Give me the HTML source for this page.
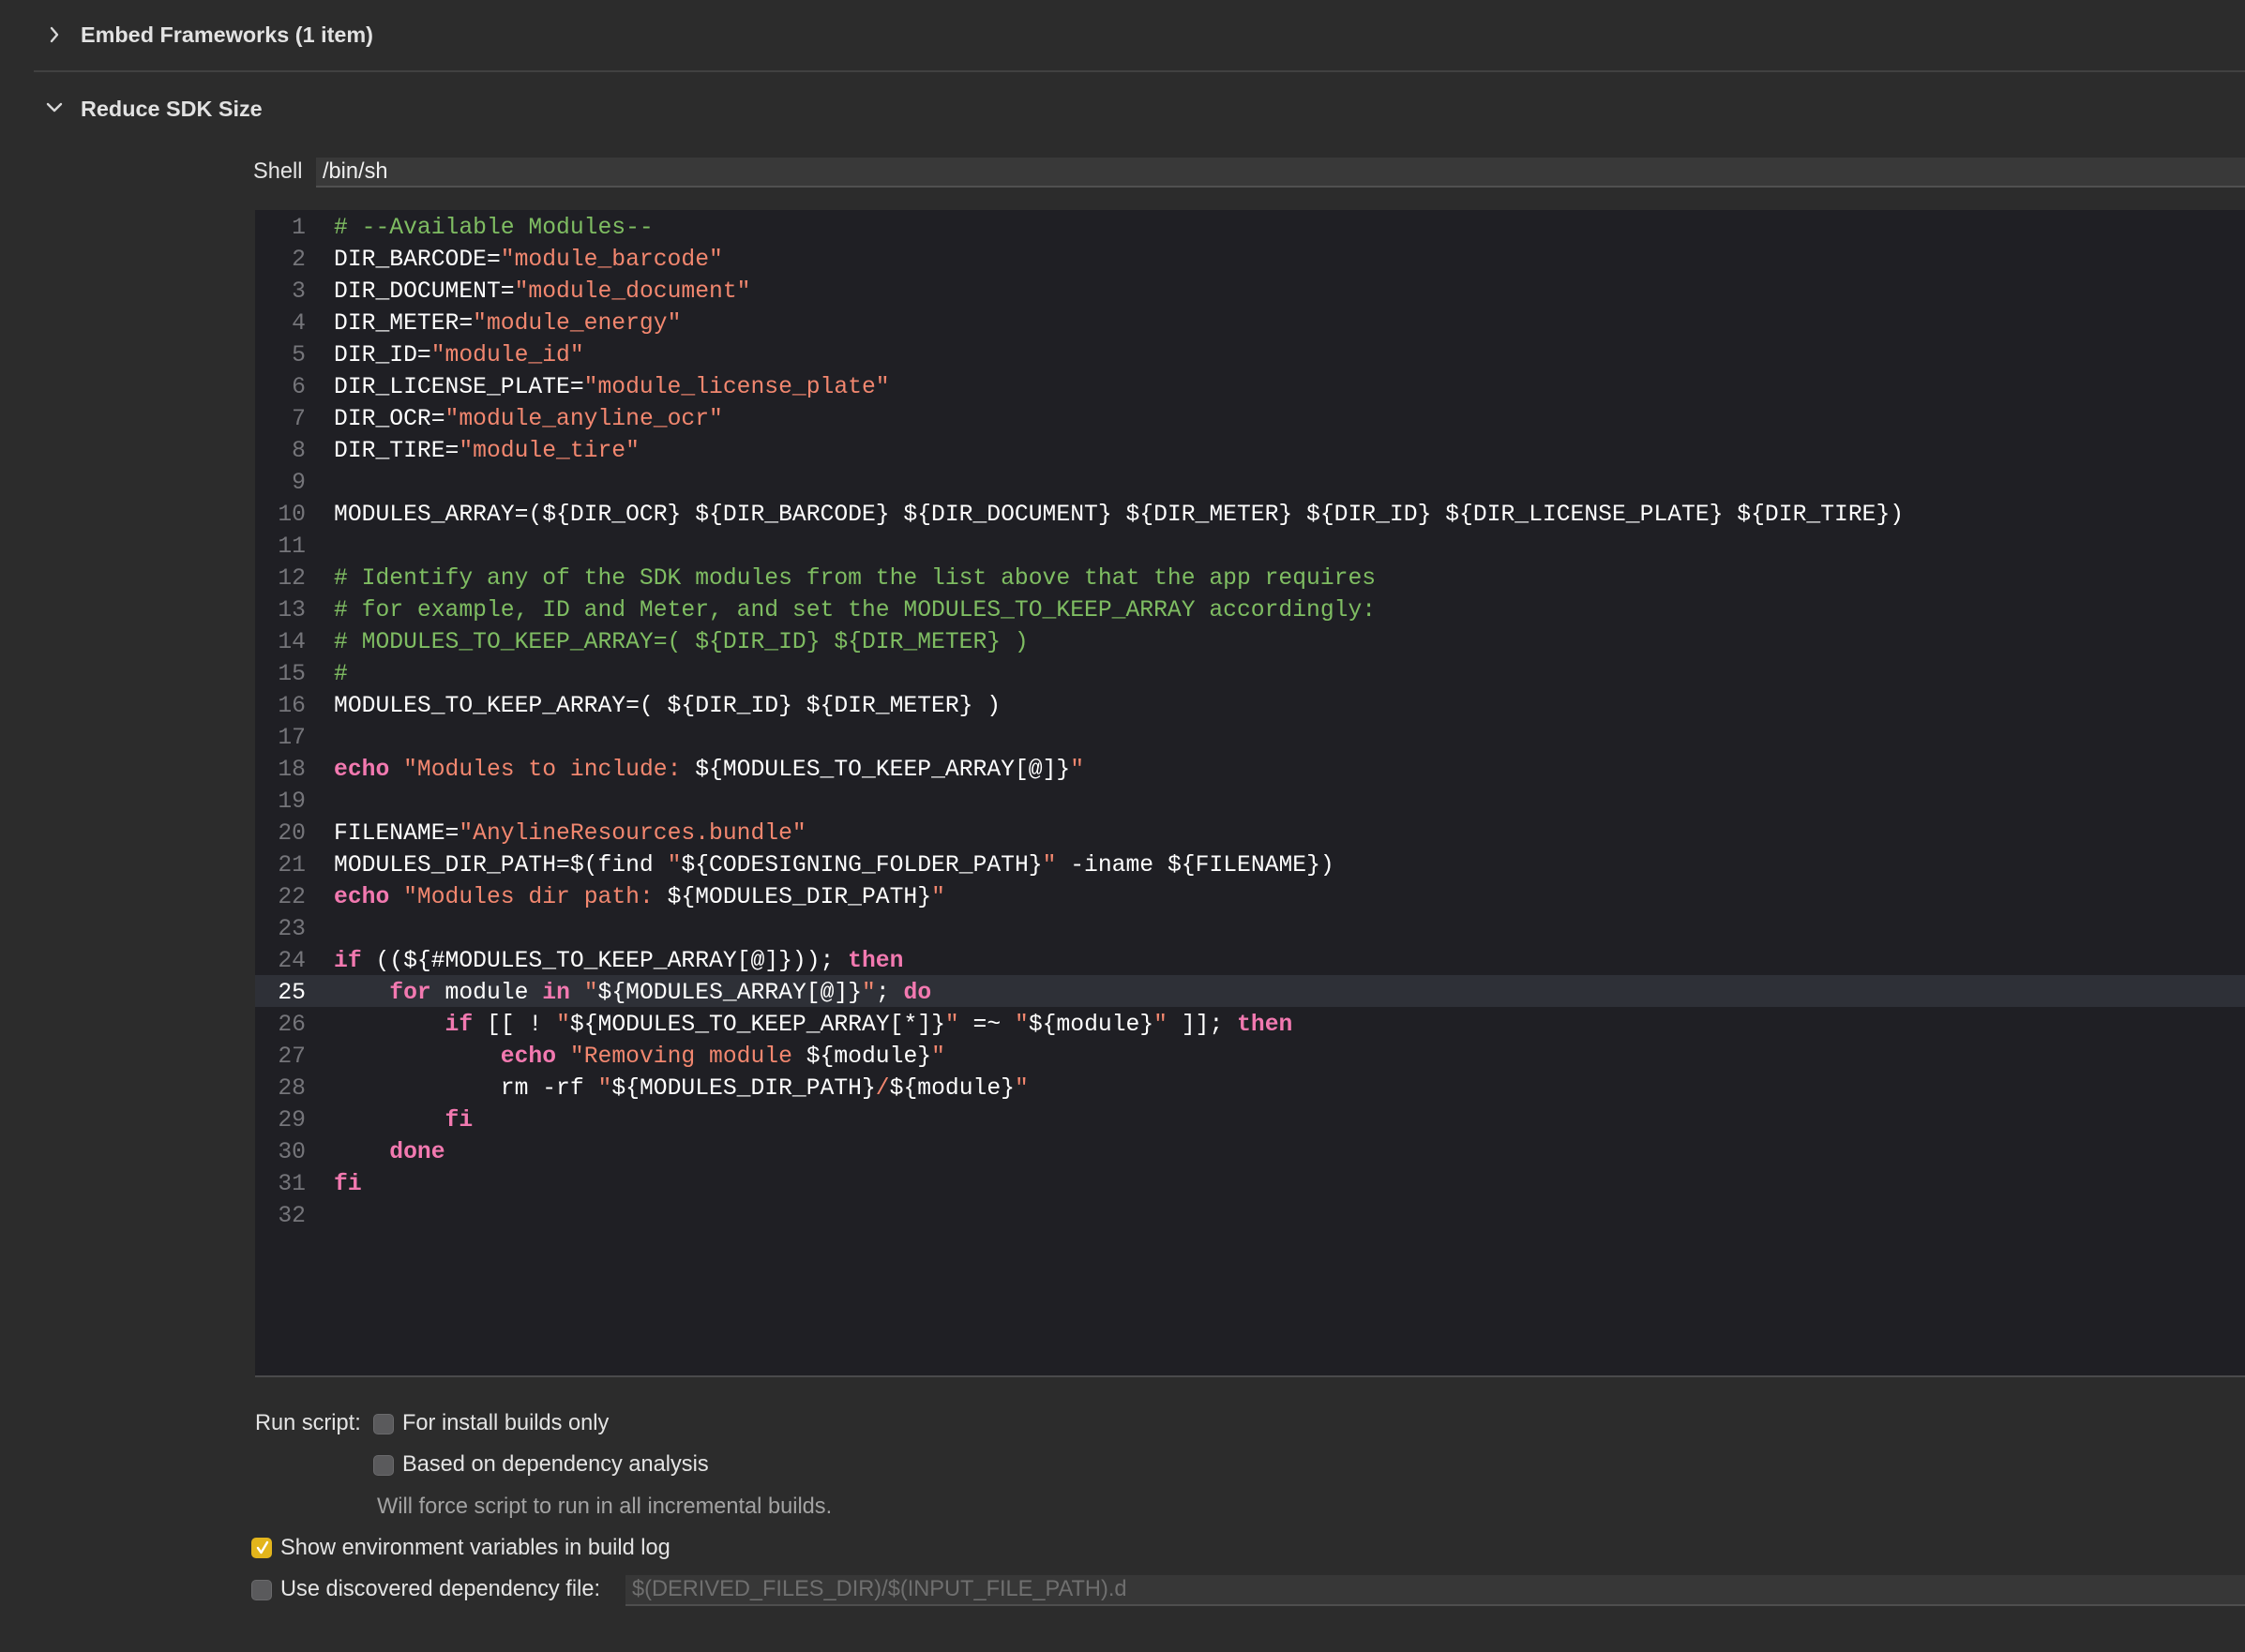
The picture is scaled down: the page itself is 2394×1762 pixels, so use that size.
<!DOCTYPE html>
<html><head><meta charset="utf-8"><style>
html,body{margin:0;padding:0;width:2394px;height:1762px;overflow:hidden;background:#2c2c2c;font-family:"Liberation Sans",sans-serif;color:#e6e6e6;}
.abs{position:absolute;}
.hdr{font-weight:bold;font-size:23.4px;color:#e2e2e2;}
.ui{font-size:23.6px;color:#e4e4e4;}
.editor{position:absolute;left:272px;top:224px;width:2122px;height:1243px;background:#1f1f24;border-bottom:2px solid #4a4a4c;}
.ln{position:absolute;left:0;width:2122px;height:34px;font-family:"Liberation Mono",monospace;font-size:24.7px;line-height:34px;white-space:pre;color:#fff;padding-top:2px;box-sizing:border-box;}
.ln .n{position:absolute;left:0;width:54px;text-align:right;color:#75757a;}
.ln .c{position:absolute;left:84px;}
.cur{background:#2e3037;}
.cur .n{color:#fff;}
.g{color:#7fbd62;}
.s{color:#f2876f;}
.k{color:#f279b0;font-weight:bold;}
.cb{position:absolute;width:20px;height:20px;border-radius:5px;background:#5a5a5c;border:1px solid #6a6a6c;}
</style></head><body>
<svg class="abs" style="left:51px;top:27px" width="14" height="20" viewBox="0 0 14 20"><path d="M4 3 L10 10 L4 17" stroke="#d8d8d8" stroke-width="2.4" fill="none" stroke-linecap="round" stroke-linejoin="round"/></svg>
<div class="abs hdr" style="left:86px;top:24px">Embed Frameworks (1 item)</div>
<div class="abs" style="left:36px;top:75px;width:2358px;height:2px;background:#414141"></div>
<svg class="abs" style="left:48px;top:108px" width="20" height="14" viewBox="0 0 20 14"><path d="M3 3 L10 10 L17 3" stroke="#d8d8d8" stroke-width="2.4" fill="none" stroke-linecap="round" stroke-linejoin="round"/></svg>
<div class="abs hdr" style="left:86px;top:103px">Reduce SDK Size</div>
<div class="abs ui" style="left:270px;top:170px">Shell</div>
<div class="abs" style="left:337px;top:168px;width:2057px;height:30px;background:#393939;border-bottom:2px solid #505050"></div>
<div class="abs ui" style="left:344px;top:170px;color:#f0f0f0">/bin/sh</div>
<div class="editor">
<div class="ln" style="top:0"><span class="n">1</span><span class="c g"># --Available Modules--</span></div>
<div class="ln" style="top:34px"><span class="n">2</span><span class="c">DIR_BARCODE=<span class="s">"module_barcode"</span></span></div>
<div class="ln" style="top:68px"><span class="n">3</span><span class="c">DIR_DOCUMENT=<span class="s">"module_document"</span></span></div>
<div class="ln" style="top:102px"><span class="n">4</span><span class="c">DIR_METER=<span class="s">"module_energy"</span></span></div>
<div class="ln" style="top:136px"><span class="n">5</span><span class="c">DIR_ID=<span class="s">"module_id"</span></span></div>
<div class="ln" style="top:170px"><span class="n">6</span><span class="c">DIR_LICENSE_PLATE=<span class="s">"module_license_plate"</span></span></div>
<div class="ln" style="top:204px"><span class="n">7</span><span class="c">DIR_OCR=<span class="s">"module_anyline_ocr"</span></span></div>
<div class="ln" style="top:238px"><span class="n">8</span><span class="c">DIR_TIRE=<span class="s">"module_tire"</span></span></div>
<div class="ln" style="top:272px"><span class="n">9</span></div>
<div class="ln" style="top:306px"><span class="n">10</span><span class="c">MODULES_ARRAY=(${DIR_OCR} ${DIR_BARCODE} ${DIR_DOCUMENT} ${DIR_METER} ${DIR_ID} ${DIR_LICENSE_PLATE} ${DIR_TIRE})</span></div>
<div class="ln" style="top:340px"><span class="n">11</span></div>
<div class="ln" style="top:374px"><span class="n">12</span><span class="c g"># Identify any of the SDK modules from the list above that the app requires</span></div>
<div class="ln" style="top:408px"><span class="n">13</span><span class="c g"># for example, ID and Meter, and set the MODULES_TO_KEEP_ARRAY accordingly:</span></div>
<div class="ln" style="top:442px"><span class="n">14</span><span class="c g"># MODULES_TO_KEEP_ARRAY=( ${DIR_ID} ${DIR_METER} )</span></div>
<div class="ln" style="top:476px"><span class="n">15</span><span class="c g">#</span></div>
<div class="ln" style="top:510px"><span class="n">16</span><span class="c">MODULES_TO_KEEP_ARRAY=( ${DIR_ID} ${DIR_METER} )</span></div>
<div class="ln" style="top:544px"><span class="n">17</span></div>
<div class="ln" style="top:578px"><span class="n">18</span><span class="c"><span class="k">echo</span> <span class="s">"Modules to include: </span>${MODULES_TO_KEEP_ARRAY[@]}<span class="s">"</span></span></div>
<div class="ln" style="top:612px"><span class="n">19</span></div>
<div class="ln" style="top:646px"><span class="n">20</span><span class="c">FILENAME=<span class="s">"AnylineResources.bundle"</span></span></div>
<div class="ln" style="top:680px"><span class="n">21</span><span class="c">MODULES_DIR_PATH=$(find <span class="s">"</span>${CODESIGNING_FOLDER_PATH}<span class="s">"</span> -iname ${FILENAME})</span></div>
<div class="ln" style="top:714px"><span class="n">22</span><span class="c"><span class="k">echo</span> <span class="s">"Modules dir path: </span>${MODULES_DIR_PATH}<span class="s">"</span></span></div>
<div class="ln" style="top:748px"><span class="n">23</span></div>
<div class="ln" style="top:782px"><span class="n">24</span><span class="c"><span class="k">if</span> ((${#MODULES_TO_KEEP_ARRAY[@]})); <span class="k">then</span></span></div>
<div class="ln cur" style="top:816px"><span class="n">25</span><span class="c">    <span class="k">for</span> module <span class="k">in</span> <span class="s">"</span>${MODULES_ARRAY[@]}<span class="s">"</span>; <span class="k">do</span></span></div>
<div class="ln" style="top:850px"><span class="n">26</span><span class="c">        <span class="k">if</span> [[ ! <span class="s">"</span>${MODULES_TO_KEEP_ARRAY[*]}<span class="s">"</span> =~ <span class="s">"</span>${module}<span class="s">"</span> ]]; <span class="k">then</span></span></div>
<div class="ln" style="top:884px"><span class="n">27</span><span class="c">            <span class="k">echo</span> <span class="s">"Removing module </span>${module}<span class="s">"</span></span></div>
<div class="ln" style="top:918px"><span class="n">28</span><span class="c">            rm -rf <span class="s">"</span>${MODULES_DIR_PATH}<span class="s">/</span>${module}<span class="s">"</span></span></div>
<div class="ln" style="top:952px"><span class="n">29</span><span class="c">        <span class="k">fi</span></span></div>
<div class="ln" style="top:986px"><span class="n">30</span><span class="c">    <span class="k">done</span></span></div>
<div class="ln" style="top:1020px"><span class="n">31</span><span class="c"><span class="k">fi</span></span></div>
<div class="ln" style="top:1054px"><span class="n">32</span></div>
</div>
<div class="abs ui" style="left:272px;top:1505px">Run script:</div>
<div class="cb" style="left:398px;top:1508px"></div>
<div class="abs ui" style="left:429px;top:1505px">For install builds only</div>
<div class="cb" style="left:398px;top:1552px"></div>
<div class="abs ui" style="left:429px;top:1549px">Based on dependency analysis</div>
<div class="abs ui" style="left:402px;top:1594px;color:#a3a3a3">Will force script to run in all incremental builds.</div>
<div class="cb" style="left:268px;top:1640px;background:#e3b51c;border-color:#e3b51c"></div>
<svg class="abs" style="left:270px;top:1641px" width="20" height="20" viewBox="0 0 20 20"><path d="M5 10 L8.5 15 L15 4" stroke="#fff" stroke-width="2.4" fill="none" stroke-linecap="round" stroke-linejoin="round"/></svg>
<div class="abs ui" style="left:299px;top:1638px">Show environment variables in build log</div>
<div class="cb" style="left:268px;top:1685px"></div>
<div class="abs ui" style="left:299px;top:1682px">Use discovered dependency file:</div>
<div class="abs" style="left:667px;top:1680px;width:1727px;height:31px;background:#373737;border-bottom:2px solid #4e4e4e"></div>
<div class="abs ui" style="left:674px;top:1682px;color:#6f6f6f">$(DERIVED_FILES_DIR)/$(INPUT_FILE_PATH).d</div>
</body></html>
